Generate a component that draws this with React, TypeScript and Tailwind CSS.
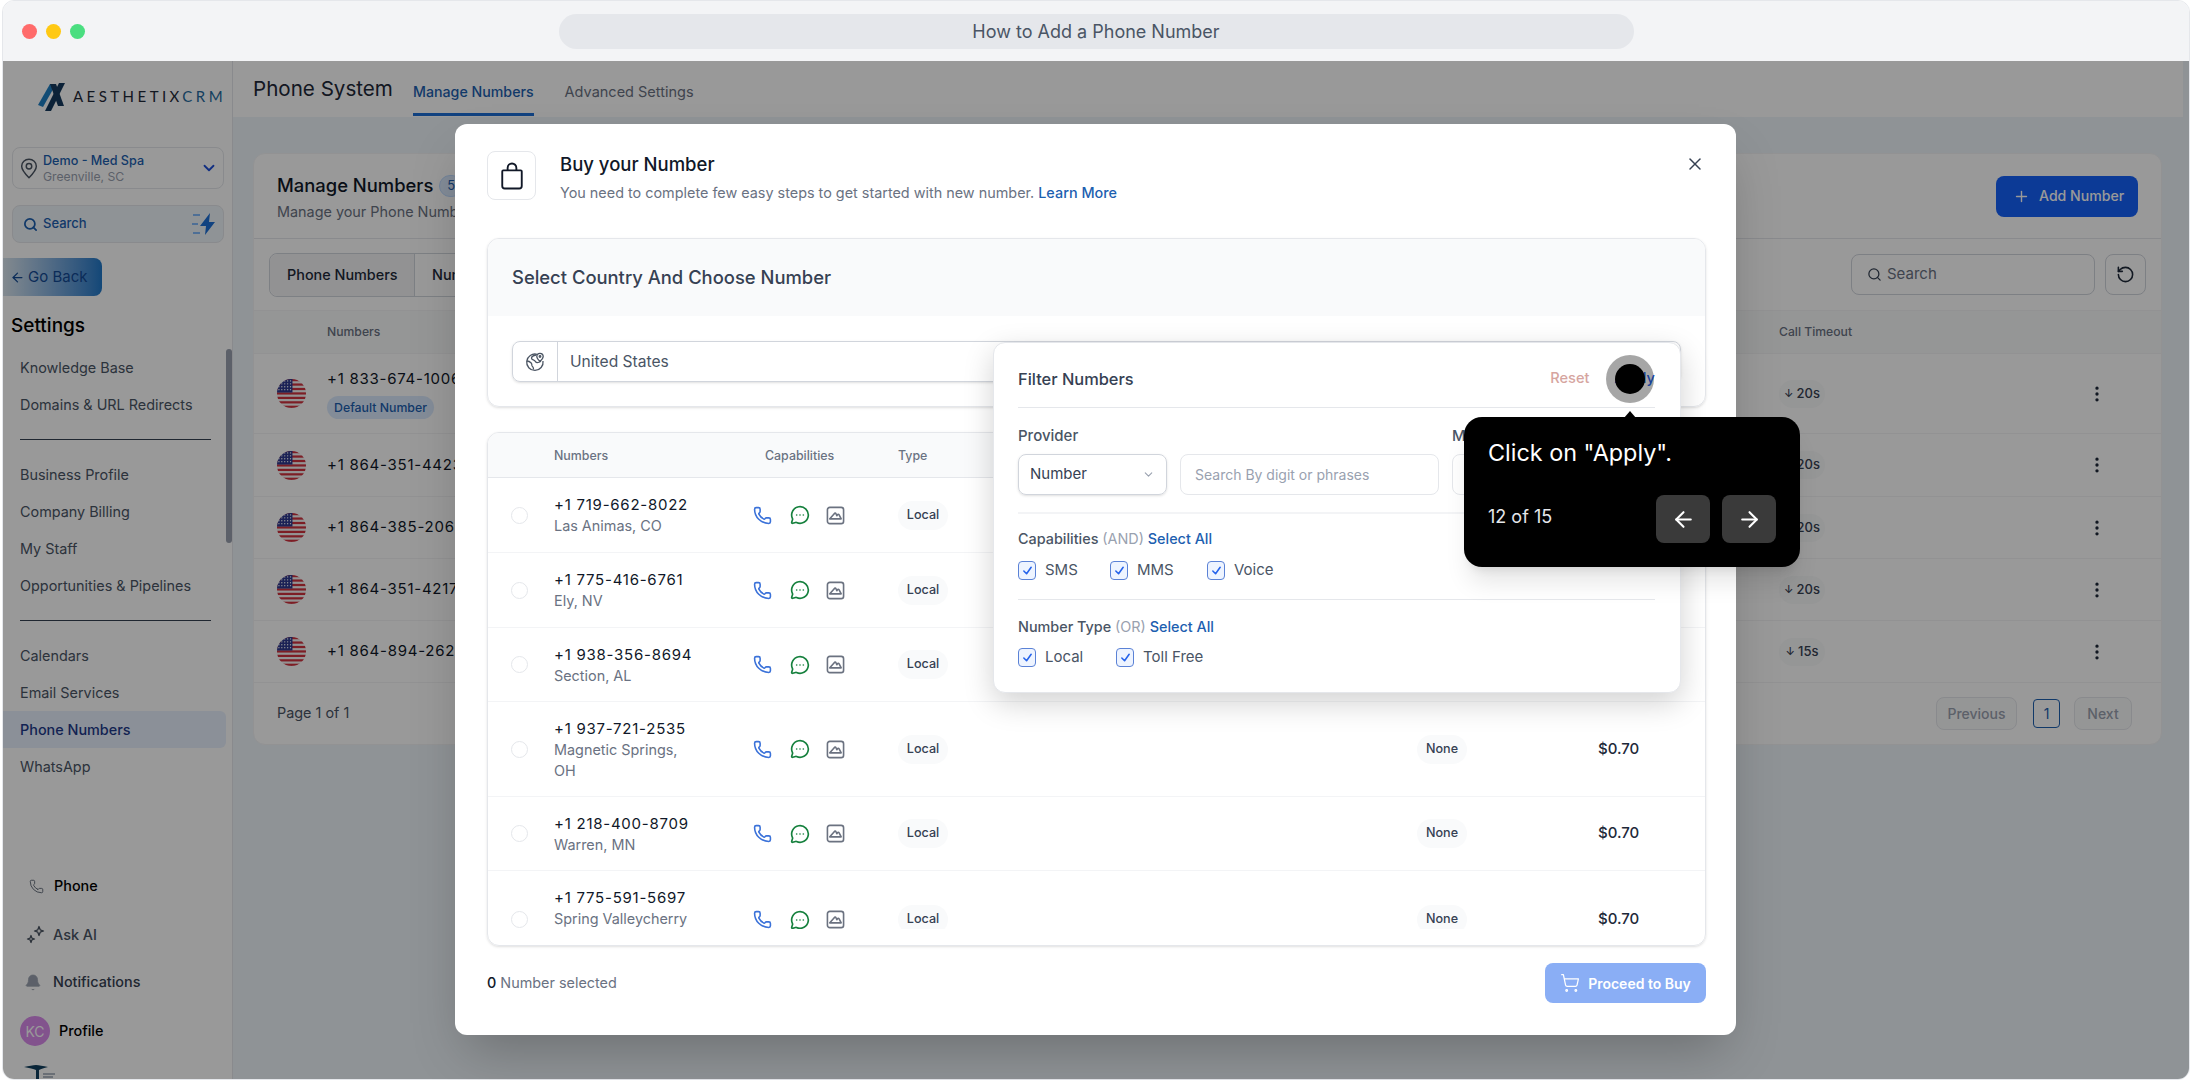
import { ArrowLeft, ArrowRight, ChevronDown, EllipsisVertical, MessageCircleMore, Phone, Plus, RotateCcw, Search, ShoppingCart, X, Bell } from 'lucide-react';

const bgRows = [
    { number: '+1 833-674-1006', timeout: '20s', h: 'h-[80px]', flagTop: true },
    { number: '+1 864-351-4423', timeout: '20s', h: 'h-[63px]' },
    { number: '+1 864-385-2065', timeout: '20s', h: 'h-[62px]' },
    { number: '+1 864-351-4217', timeout: '20s', h: 'h-[62px]' },
    { number: '+1 864-894-2623', timeout: '15s', h: 'h-[62px]' },
];

const numbers = [
    { number: '+1 719-662-8022', place: 'Las Animas, CO', h: 'h-[75px]' },
    { number: '+1 775-416-6761', place: 'Ely, NV', h: 'h-[75px]' },
    { number: '+1 938-356-8694', place: 'Section, AL', h: 'h-[74px]' },
    { number: '+1 937-721-2535', place: 'Magnetic Springs, OH', h: 'h-[95px]' },
    { number: '+1 218-400-8709', place: 'Warren, MN', h: 'h-[74px]' },
    { number: '+1 775-591-5697', place: 'Spring Valleycherry', h: 'h-[98px]' },
];

function UsFlag() {
    return (
        <svg viewBox="0 0 30 30" className="w-[29px] h-[29px]">
            <defs>
                <clipPath id="flagClip">
                    <circle cx="15" cy="15" r="15" />
                </clipPath>
            </defs>
            <g clipPath="url(#flagClip)">
                <rect width="30" height="30" fill="#f5f5f5" />
                {[0, 4.6, 9.2, 13.8, 18.4, 23, 27.6].map((y) => (
                    <rect key={y} y={y} width="30" height="2.3" fill="#d0323f" />
                ))}
                <rect width="16" height="14" fill="#2f3a8f" />
                {[2, 5, 8, 11].map((y) =>
                    [2, 5, 8, 11, 14].map((x) => <circle key={`${x}-${y}`} cx={x} cy={y} r="0.7" fill="#fff" />)
                )}
            </g>
        </svg>
    );
}

function Logo() {
    return (
        <svg viewBox="0 0 28 29" className="w-[28px] h-[29px]">
            <path d="M0 23 L12 2 H18 L5 25 Z" fill="#1f7fc4" />
            <path d="M27 1 H21 L7 29 H13 Z" fill="#153a5e" />
            <path d="M12 2 H18 L26 24 H20 Z" fill="#153a5e" />
        </svg>
    );
}

function PinIcon() {
    return (
        <svg viewBox="0 0 24 24" className="w-[22px] h-[25px]" fill="none" stroke="#4b5563" strokeWidth="1.6">
            <path d="M12 22c5-5 8-8.6 8-12.5C20 5 16.4 2 12 2S4 5 4 9.5C4 13.4 7 17 12 22Z" strokeLinejoin="round" />
            <circle cx="12" cy="9.5" r="3" />
        </svg>
    );
}

function BoltIcon() {
    return (
        <svg viewBox="0 0 24 24" className="w-[24px] h-[24px]" fill="none">
            <path d="M1 3h7M0 12h6M1 21h7" stroke="#60a5fa" strokeWidth="1.4" />
            <path d="M18 1 8 14h6l-1 9 10-13h-6l1-9Z" fill="#1d6fd6" />
        </svg>
    );
}

function SparkleIcon() {
    return (
        <svg viewBox="0 0 20 20" className="w-[20px] h-[20px]" fill="none" stroke="#4b5563" strokeWidth="1.3" strokeLinejoin="round">
            <path d="M13 1.5l1.2 3.3 3.3 1.2-3.3 1.2L13 10.5l-1.2-3.3L8.5 6l3.3-1.2Z" />
            <path d="M5 10.5l.9 2.6 2.6.9-2.6.9L5 17.5l-.9-2.6-2.6-.9 2.6-.9Z" />
        </svg>
    );
}

function BagIcon() {
    return (
        <svg viewBox="0 0 24 24" className="w-[30px] h-[30px]" fill="none" stroke="#111827" strokeWidth="1.5" strokeLinejoin="round">
            <path d="M5 7.5h14a.8.8 0 0 1 .8.8V20a2 2 0 0 1-2 2H6.2a2 2 0 0 1-2-2V8.3a.8.8 0 0 1 .8-.8Z" />
            <path d="M8.5 7.5V5.5a3.5 3.5 0 0 1 7 0v2" />
        </svg>
    );
}

function GlobePinIcon() {
    return (
        <svg viewBox="0 0 20 20" className="w-[20px] h-[20px]" fill="none" stroke="#4b5563" strokeWidth="1.3" strokeLinejoin="round">
            <path d="M12 2.3A8.2 8.2 0 1 0 18 9" />
            <path d="M2 9c2 0 3 .8 4.2 2 .9.9.4 2 .9 3 .6 1 1.6 1.2 1.4 3.5" />
            <path d="M11 3c-2 .4-4.5 1.5-4.5 3.2 0 1.3 2 1.5 3 2.3 1 .8 1 2.2 2.8 2.2s3-1 3.7-1.5" />
            <path d="M15 9.5c2-2 3.2-3.4 3.2-5A3.2 3.2 0 0 0 11.8 4.5c0 1.6 1.2 3 3.2 5Z" />
            <circle cx="15" cy="4.5" r=".8" />
        </svg>
    );
}

function ImageBoxIcon() {
    return (
        <svg viewBox="0 0 20 20" className="w-[19px] h-[19px]" fill="none" stroke="#6b7280" strokeWidth="1.7" strokeLinejoin="round">
            <rect x="1.5" y="1.5" width="17" height="17" rx="2.5" />
            <path d="M4 13.5h12l-2.2-4.2c-.5-.9-1.3-.8-1.8 0l-.6.9-.9-2c-.4-.9-1.3-.9-1.8 0Z" />
        </svg>
    );
}

function Checkbox() {
    return (
        <span className="flex items-center justify-center w-[18px] h-[19px] rounded-[4px] border border-[#5b82d6] bg-[#eef4ff] shrink-0">
            <svg viewBox="0 0 12 12" className="w-[11px] h-[11px]" fill="none" stroke="#2563eb" strokeWidth="1.7" strokeLinecap="round" strokeLinejoin="round">
                <path d="M2 6.5 5 9.5 10 2.5" />
            </svg>
        </span>
    );
}

function Sidebar() {
    const NavItem = ({ label, active }: { label: string; active?: boolean }) => (
        <div className={`h-[37px] flex items-center text-[14.4px] pl-[17px] w-[223px] rounded-r-md ${active ? 'bg-[#e8f0fd] text-[#1e3a8a] font-medium' : 'text-gray-600'}`}>
            {label}
        </div>
    );

    return (
        <aside className="relative w-[230px] shrink-0 bg-white border-r border-gray-200 flex flex-col">
            {/* Logo */}
            <div className="flex items-center shrink-0 h-[30px] mt-[20px] ml-[35px] gap-[7px]">
                <Logo />
                <span className="text-[15px] leading-none tracking-[0.23em] text-[#1f2937] font-[Lato,sans-serif] whitespace-nowrap">
                    AESTHETIX<span className="text-[#256a9e]">CRM</span>
                </span>
            </div>

            {/* Location */}
            <div className="flex items-center shrink-0 w-[212px] h-[42px] ml-[9px] mt-[36px] rounded-lg border border-gray-200 pl-[5px] pr-[5px]">
                <PinIcon />
                <div className="ml-[3px] flex-1">
                    <div className="text-[12.6px] leading-[16px] font-medium text-[#1d5fb0]">Demo - Med Spa</div>
                    <div className="text-[12.2px] leading-[15px] text-gray-400">Greenville, SC</div>
                </div>
                <ChevronDown className="w-[18px] h-[18px] text-[#1d4ed8]" strokeWidth={2.4} />
            </div>

            {/* Search */}
            <div className="flex items-center shrink-0 w-[212px] h-[38px] ml-[9px] mt-[16px] rounded-lg border border-gray-200 bg-[#eef5fa] pl-[10px] pr-[7px]">
                <Search className="w-[15px] h-[15px] text-[#1d5fb0]" strokeWidth={2.8} />
                <span className="ml-[5px] flex-1 text-[13px] font-medium text-[#1d5fb0]">Search</span>
                <BoltIcon />
            </div>

            {/* Go back */}
            <div className="flex items-center shrink-0 gap-[3px] w-[99px] h-[38px] mt-[15px] pl-[7px] rounded-r-lg bg-gradient-to-r from-[#dbe6ee] to-[#1f78c8] text-[#134a94] text-[15px]">
                <ArrowLeft className="w-[15px] h-[15px]" />
                Go Back
            </div>

            <div className="shrink-0 ml-[8px] mt-[16px] h-[28px] text-[19px] leading-[28px] font-medium text-black">Settings</div>

            <nav className="shrink-0 mt-[9px] flex flex-col">
                <NavItem label="Knowledge Base" />
                <NavItem label="Domains & URL Redirects" />
                <div className="my-[16px] ml-[17px] w-[191px] h-px bg-gray-700" />
                <NavItem label="Business Profile" />
                <NavItem label="Company Billing" />
                <NavItem label="My Staff" />
                <NavItem label="Opportunities & Pipelines" />
                <div className="my-[16px] ml-[17px] w-[191px] h-px bg-gray-700" />
                <NavItem label="Calendars" />
                <NavItem label="Email Services" />
                <NavItem label="Phone Numbers" active />
                <NavItem label="WhatsApp" />
            </nav>

            <div className="shrink-0 mt-[81px] flex flex-col text-[14.4px] font-medium">
                <div className="flex items-center h-[40px] pl-[26px] text-black">
                    <Phone className="w-[15px] h-[15px] text-gray-600 mr-[10px]" strokeWidth={1.3} />
                    Phone
                </div>
                <div className="flex items-center h-[40px] mt-[9px] pl-[23px] text-gray-600">
                    <SparkleIcon />
                    <span className="ml-[7px]">Ask AI</span>
                </div>
                <div className="flex items-center h-[40px] mt-[7px] pl-[21px] text-gray-700">
                    <Bell className="w-[18px] h-[19px] text-gray-400" fill="currentColor" strokeWidth={1} />
                    <span className="ml-[11px]">Notifications</span>
                </div>
                <div className="flex items-center h-[40px] mt-[9px] pl-[17px] text-black">
                    <span className="flex items-center justify-center w-[30px] h-[30px] rounded-full bg-[#d98aec] text-white font-normal text-[14px]">KC</span>
                    <span className="ml-[9px]">Profile</span>
                </div>
                <svg viewBox="0 0 34 24" className="w-[34px] h-[24px] ml-[20px] mt-[12px]" fill="none">
                    <path d="M1 4c5-1 9-2 12-2 3 0 7 1 12 2-4 1-7 2-9 3v15h-3V7C11 6 6 5 1 4Z" fill="#12405f" />
                    <path d="M20 11h12M20 14h10" stroke="#64748b" strokeWidth="1.2" />
                </svg>
            </div>

            <div className="absolute left-[223px] top-[288px] w-[6px] h-[194px] rounded-full bg-gray-400" />
        </aside>
    );
}

function BackgroundPage() {
    return (
        <main className="flex-1 min-w-0 bg-[#eef5fa]">
            <div className="flex items-center w-[1950px] h-[56px] pl-[20px] bg-white">
                <h1 className="w-[160px] text-[20.6px] text-gray-800 whitespace-nowrap">Phone System</h1>
                <div className="relative h-full flex items-center text-[14.2px] font-medium text-[#1d5fb0] pt-[6px]">
                    Manage Numbers
                    <span className="absolute left-0 right-0 bottom-[1px] h-[3px] bg-[#1d6fd6]" />
                </div>
                <div className="ml-[31px] pt-[6px] text-[14.5px] text-gray-500">Advanced Settings</div>
            </div>

            <div className="ml-[20px] mt-[36px] w-[1909px] h-[592px] rounded-xl bg-white border border-gray-100 overflow-hidden">
                <div className="flex items-center justify-between h-[85px] pl-[23px] pr-[23px] border-b border-gray-200">
                    <div className="pt-[3px]">
                        <div className="flex items-center gap-[6px]">
                            <span className="text-[18.4px] font-medium text-gray-900">Manage Numbers</span>
                            <span className="px-[7px] rounded-full bg-blue-100 text-[13px] text-[#1d5fb0] border border-blue-200">5</span>
                        </div>
                        <div className="text-[14.4px] text-gray-500 mt-[1px]">Manage your Phone Numbers</div>
                    </div>
                    <button className="flex items-center gap-[9px] w-[142px] h-[41px] pl-[17px] rounded-lg bg-[#1561fa] text-white text-[14.1px] font-medium">
                        <Plus className="w-[17px] h-[17px]" />
                        Add Number
                    </button>
                </div>

                <div className="flex items-center justify-between h-[71px] pl-[15px] pr-[15px]">
                    <div className="flex h-[44px] rounded-lg border border-gray-300 text-[14.4px] font-medium text-gray-800">
                        <div className="flex items-center w-[145px] pl-[17px] bg-gray-100 rounded-l-lg border-r border-gray-300">Phone Numbers</div>
                        <div className="flex items-center w-[160px] pl-[17px]">Number Pools</div>
                    </div>
                    <div className="flex items-center gap-[10px]">
                        <div className="flex items-center w-[244px] h-[41px] pl-[15px] rounded-lg border border-gray-300 text-[15px] text-gray-500">
                            <Search className="w-[15px] h-[15px] mr-[5px] text-gray-700" />
                            Search
                        </div>
                        <div className="flex items-center justify-center w-[41px] h-[41px] rounded-lg border border-gray-300">
                            <RotateCcw className="w-[19px] h-[19px] text-gray-800" />
                        </div>
                    </div>
                </div>

                <div className="grid grid-cols-[73px_1452px_300px_36px] items-center h-[44px] bg-gray-50 border-y border-gray-100 text-[12.2px] font-medium text-gray-500">
                    <span />
                    <span>Numbers</span>
                    <span>Call Timeout</span>
                </div>

                {bgRows.map((row) => (
                    <div key={row.number} className={`grid grid-cols-[73px_1452px_300px_36px] items-center border-b border-gray-100 ${row.h}`}>
                        <div className="pl-[23px] flex"><UsFlag /></div>
                        <div>
                            <div className="text-[15px] tracking-[0.05em] text-gray-900">{row.number}</div>
                            {row.flagTop && (
                                <span className="inline-block mt-[5px] w-[107px] h-[23px] leading-[23px] text-center rounded-full bg-blue-100 text-[12.3px] font-medium text-[#1d5fb0]">
                                    Default Number
                                </span>
                            )}
                        </div>
                        <div>
                            <span className="inline-flex items-center gap-[3px] h-[28px] w-[46px] justify-center rounded-full bg-gray-50 text-[13px] font-medium text-gray-700">
                                <span className="text-[11px]">↓</span>
                                {row.timeout}
                            </span>
                        </div>
                        <EllipsisVertical className="w-[20px] h-[20px] text-gray-800 justify-self-center" />
                    </div>
                ))}

                <div className="flex items-center justify-between pl-[23px] pr-[29px] h-[60px] text-[14px] font-medium">
                    <span className="text-[14.4px] font-normal text-gray-600">Page 1 of 1</span>
                    <div className="flex items-center text-gray-400">
                        <span className="flex items-center justify-center w-[81px] h-[33px] rounded-lg border border-gray-200 bg-gray-50">Previous</span>
                        <span className="flex items-center justify-center ml-[16px] w-[27px] h-[29px] rounded border border-[#1d5fb0] text-[#1d5fb0] font-normal">1</span>
                        <span className="flex items-center justify-center ml-[14px] w-[58px] h-[33px] rounded-lg border border-gray-200 bg-gray-50">Next</span>
                    </div>
                </div>
            </div>
        </main>
    );
}

function FilterPopup() {
    return (
        <div className="absolute left-[538px] top-[218px] w-[688px] h-[351px] pl-[24px] pr-[25px] rounded-xl bg-white border border-gray-200 shadow-[0_10px_30px_rgba(0,0,0,0.18)]">
            <div className="flex items-center justify-between h-[65px] pt-[8px] border-b border-gray-200">
                <span className="text-[16.4px] font-medium text-gray-700">Filter Numbers</span>
                <div className="flex items-center gap-[25px] text-[14.6px] font-medium">
                    <span className="text-[#d6a59f]">Reset</span>
                    <span className="text-[#2563eb]">Apply</span>
                </div>
            </div>

            <div className="grid grid-cols-[149px_259px_204px] gap-x-[13px] pt-[18px] text-[15px] font-medium text-gray-600">
                <span className="col-span-2 leading-[20px]">Provider</span>
                <span className="leading-[20px]">Monthly Price</span>
                <div className="flex items-center justify-between mt-[8px] h-[41px] px-[11px] rounded-lg border border-gray-300 shadow-sm font-normal text-gray-700">
                    Number
                    <ChevronDown className="w-[13px] h-[13px] text-gray-400" />
                </div>
                <div className="flex items-center mt-[8px] h-[41px] px-[14px] rounded-lg border border-gray-200 text-[14px] font-normal text-gray-400">
                    Search By digit or phrases
                </div>
                <div className="mt-[8px] h-[41px] rounded-lg border border-gray-200" />
            </div>

            <div className="mt-[17px] h-[2px] bg-gray-100" />

            <div className="mt-[15px] h-[20px] leading-[20px] text-[14.4px] font-medium text-gray-600 whitespace-nowrap">
                Capabilities <span className="font-normal text-gray-400">(AND)</span> <span className="text-[#1d5fb0]">Select All</span>
            </div>
            <div className="flex items-center mt-[12px] h-[19px] text-[15px] text-gray-600">
                <Checkbox /><span className="ml-[9px] w-[65px]">SMS</span>
                <Checkbox /><span className="ml-[9px] w-[70px]">MMS</span>
                <Checkbox /><span className="ml-[9px]">Voice</span>
            </div>

            <div className="mt-[19px] h-px bg-gray-200" />

            <div className="mt-[17px] h-[20px] leading-[20px] text-[14.4px] font-medium text-gray-600 whitespace-nowrap">
                Number Type <span className="font-normal text-gray-400">(OR)</span> <span className="text-[#1d5fb0]">Select All</span>
            </div>
            <div className="flex items-center mt-[11px] h-[19px] text-[15px] text-gray-600">
                <Checkbox /><span className="ml-[9px] w-[71px]">Local</span>
                <Checkbox /><span className="ml-[9px]">Toll Free</span>
            </div>
        </div>
    );
}

function BuyModal() {
    return (
        <div className="absolute left-[455px] top-[124px] w-[1281px] h-[911px] px-[32px] pt-[27px] rounded-xl bg-white shadow-2xl">
            <X className="absolute right-[31px] top-[30px] w-[20px] h-[20px] text-gray-700" strokeWidth={1.8} />

            <div className="flex gap-[24px]">
                <div className="flex items-center justify-center w-[49px] h-[49px] rounded-lg border border-gray-200">
                    <BagIcon />
                </div>
                <div>
                    <div className="text-[18.5px] leading-[26px] font-medium text-gray-900">Buy your Number</div>
                    <div className="mt-[6px] text-[14.4px] leading-[20px] text-gray-500">
                        You need to complete few easy steps to get started with new number. <span className="font-medium text-[#1d5fb0]">Learn More</span>
                    </div>
                </div>
            </div>

            <div className="mt-[35px] w-[1219px] h-[169px] rounded-xl border border-gray-200 shadow-sm overflow-hidden">
                <div className="flex items-center h-[77px] pl-[24px] bg-gray-50 text-[18.4px] font-medium text-gray-700">
                    Select Country And Choose Number
                </div>
                <div className="flex items-center ml-[24px] mt-[25px] w-[1169px] h-[41px] rounded-lg border border-gray-300 shadow-sm">
                    <div className="flex items-center justify-center w-[45px] h-full border-r border-gray-300">
                        <GlobePinIcon />
                    </div>
                    <span className="ml-[12px] text-[15.6px] text-gray-600">United States</span>
                </div>
            </div>

            <div className="mt-[25px] w-[1219px] h-[514px] rounded-xl border border-gray-200 shadow-sm overflow-hidden">
                <div className="grid grid-cols-[66px_199px_145px_519px_181px_1fr] items-center h-[45px] pt-[2px] bg-gray-50 border-b border-gray-200 text-[12.4px] font-medium text-gray-500">
                    <span />
                    <span>Numbers</span>
                    <span className="pl-[12px]">Capabilities</span>
                    <span>Type</span>
                </div>
                <div className="h-[451px] overflow-hidden">
                    {numbers.map((row) => (
                        <div key={row.number} className={`grid grid-cols-[66px_199px_145px_519px_181px_1fr] items-center border-b border-gray-100 ${row.h}`}>
                            <span className="ml-[23px] w-[17px] h-[17px] rounded-full border border-gray-200" />
                            <div className="self-start pt-[16px] w-[140px]">
                                <div className="text-[15px] leading-[21px] tracking-[0.05em] text-gray-900 whitespace-nowrap">{row.number}</div>
                                <div className="text-[14.4px] leading-[21px] text-gray-500">{row.place}</div>
                            </div>
                            <div className="flex items-center">
                                <Phone className="w-[19px] h-[19px] text-[#3b72d9]" strokeWidth={2} />
                                <MessageCircleMore className="ml-[18px] w-[20px] h-[20px] text-[#15803d]" strokeWidth={2} />
                                <span className="ml-[16px] flex"><ImageBoxIcon /></span>
                            </div>
                            <span className="flex items-center justify-center w-[50px] h-[29px] rounded-full bg-gray-50 text-[12.6px] font-medium text-gray-700">Local</span>
                            <span className="flex items-center justify-center w-[50px] h-[29px] rounded-full bg-gray-50 text-[12.6px] font-medium text-gray-700">None</span>
                            <span className="text-[15px] font-medium text-gray-800">$0.70</span>
                        </div>
                    ))}
                </div>
            </div>

            <div className="flex items-center justify-between mt-[17px] w-[1219px]">
                <span className="text-[14.4px] text-gray-500"><span className="font-medium text-gray-900">0</span> Number selected</span>
                <button className="flex items-center justify-center gap-[8px] w-[161px] h-[40px] rounded-lg bg-[#8aaef5] text-white text-[14px] font-semibold">
                    <ShoppingCart className="w-[20px] h-[20px]" strokeWidth={1.5} />
                    Proceed to Buy
                </button>
            </div>

            <FilterPopup />
        </div>
    );
}

function GuideTooltip() {
    return (
        <>
            <div className="absolute left-[1606px] top-[355px] flex items-center justify-center w-[48px] h-[48px] rounded-full bg-black/35">
                <span className="w-[30px] h-[30px] rounded-full bg-black" />
            </div>
            <div className="absolute left-[1624px] top-[411px] w-0 h-0 border-x-[6px] border-x-transparent border-b-[7px] border-b-black" />
            <div className="absolute left-[1464px] top-[417px] w-[336px] h-[150px] px-[24px] pt-[22px] rounded-[18px] bg-black text-white shadow-xl">
                <div className="text-[23.4px] leading-[28px]">Click on "Apply".</div>
                <div className="flex items-center justify-between mt-[28px]">
                    <span className="text-[18px] text-gray-200 -mt-[5px]">12 of 15</span>
                    <div className="flex gap-[12px]">
                        <span className="flex items-center justify-center w-[54px] h-[48px] rounded-lg bg-[#3a3a3a]">
                            <ArrowLeft className="w-[25px] h-[25px]" />
                        </span>
                        <span className="flex items-center justify-center w-[54px] h-[48px] rounded-lg bg-[#3a3a3a]">
                            <ArrowRight className="w-[25px] h-[25px]" />
                        </span>
                    </div>
                </div>
            </div>
        </>
    );
}

export default function App() {
    return (
        <div className="relative w-[2192px] h-[1080px] overflow-hidden bg-white font-[Inter,sans-serif]">
            <div className="mx-[2px] h-full rounded-xl overflow-hidden border border-gray-200 flex flex-col">
                {/* Browser chrome */}
                <div className="relative flex items-center justify-center h-[60px] shrink-0 bg-gray-100">
                    <div className="absolute left-[19px] flex gap-[9px]">
                        <span className="w-[15px] h-[15px] rounded-full bg-[#ff6b6b]" />
                        <span className="w-[15px] h-[15px] rounded-full bg-[#ffc914]" />
                        <span className="w-[15px] h-[15px] rounded-full bg-[#4ade80]" />
                    </div>
                    <div className="flex items-center justify-center w-[1075px] h-[35px] rounded-full bg-gray-200 text-[18px] text-gray-600">
                        How to Add a Phone Number
                    </div>
                </div>

                <div className="relative flex flex-1 min-h-0">
                    <Sidebar />
                    <BackgroundPage />
                    <div className="absolute inset-0 bg-black/40" />
                </div>
            </div>

            <BuyModal />
            <GuideTooltip />
        </div>
    );
}
